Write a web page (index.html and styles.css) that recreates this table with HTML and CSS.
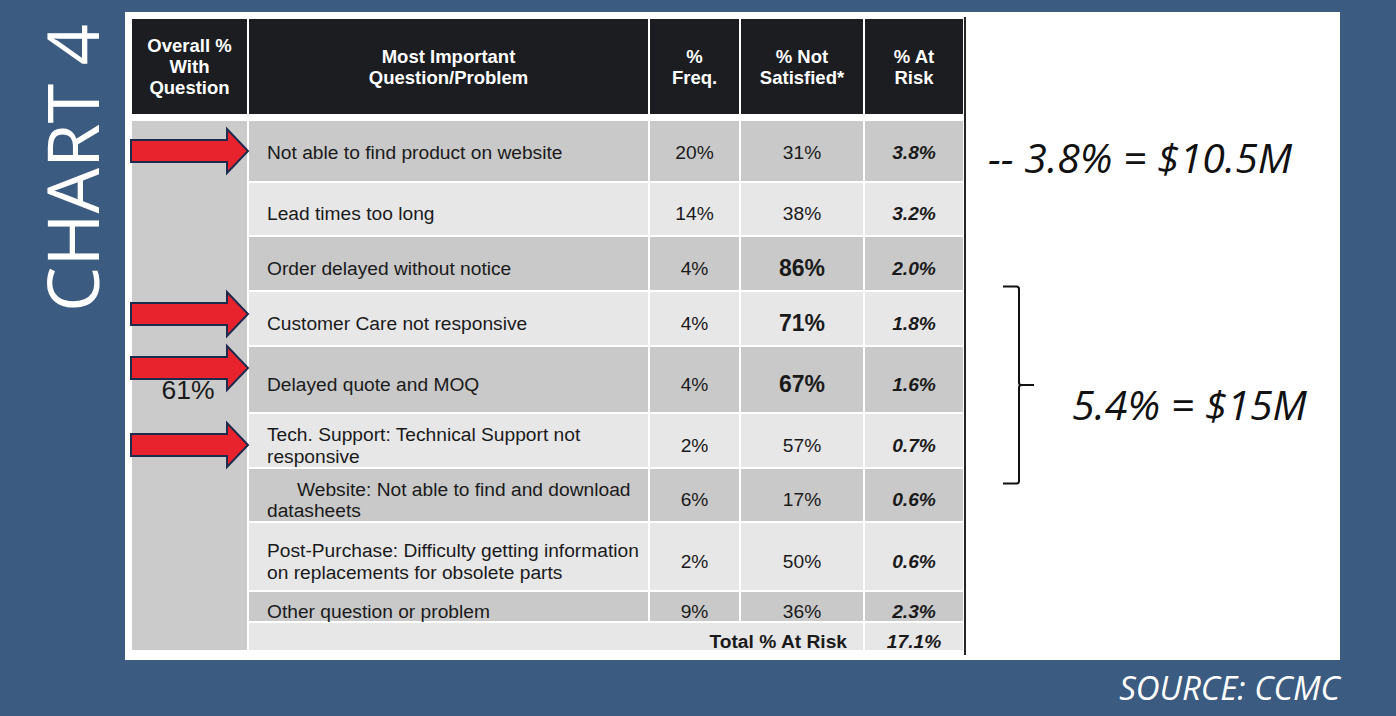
FILE: index.html
```html
<!DOCTYPE html>
<html lang="en">
<head>
<meta charset="utf-8">
<title>Chart 4</title>
<link rel="stylesheet" href="styles.css">
</head>
<body>
<div class="slide">
  <div class="side">
    <h1 class="chart-title">CHART 4</h1>
  </div>
  <div class="main">
    <div class="panel">
      <div class="table-wrap">
        <div class="thead">
          <div class="th">Overall %<br>With<br>Question</div>
          <div class="th">Most Important<br>Question/Problem</div>
          <div class="th">%<br>Freq.</div>
          <div class="th">% Not<br>Satisfied*</div>
          <div class="th">% At<br>Risk</div>
        </div>
        <div class="tbody">
          <div class="overall">61%</div>

          <div class="tr dark first">
            <div class="td q">Not able to find product on website</div>
            <div class="td n">20%</div>
            <div class="td n">31%</div>
            <div class="td r">3.8%</div>
          </div>
          <div class="tr light">
            <div class="td q">Lead times too long</div>
            <div class="td n">14%</div>
            <div class="td n">38%</div>
            <div class="td r">3.2%</div>
          </div>
          <div class="tr dark">
            <div class="td q">Order delayed without notice</div>
            <div class="td n">4%</div>
            <div class="td n big">86%</div>
            <div class="td r">2.0%</div>
          </div>
          <div class="tr light">
            <div class="td q">Customer Care not responsive</div>
            <div class="td n">4%</div>
            <div class="td n big">71%</div>
            <div class="td r">1.8%</div>
          </div>
          <div class="tr dark">
            <div class="td q">Delayed quote and MOQ</div>
            <div class="td n">4%</div>
            <div class="td n big">67%</div>
            <div class="td r">1.6%</div>
          </div>
          <div class="tr light">
            <div class="td q"><span>Tech. Support: Technical Support not<br>responsive</span></div>
            <div class="td n">2%</div>
            <div class="td n">57%</div>
            <div class="td r">0.7%</div>
          </div>
          <div class="tr dark">
            <div class="td q"><span class="indent">Website: Not able to find and download<br>datasheets</span></div>
            <div class="td n">6%</div>
            <div class="td n">17%</div>
            <div class="td r">0.6%</div>
          </div>
          <div class="tr light">
            <div class="td q"><span>Post-Purchase: Difficulty getting information<br>on replacements for obsolete parts</span></div>
            <div class="td n">2%</div>
            <div class="td n">50%</div>
            <div class="td r">0.6%</div>
          </div>
          <div class="tr dark">
            <div class="td q">Other question or problem</div>
            <div class="td n">9%</div>
            <div class="td n">36%</div>
            <div class="td r">2.3%</div>
          </div>
          <div class="tr light total">
            <div class="td total-label">Total % At Risk</div>
            <div class="td r">17.1%</div>
          </div>

          <svg class="arrow a1" viewBox="0 0 120 46" width="120" height="46"><polygon points="1,12 97,12 97,1 118,23 97,45 97,34 1,34"/></svg>
          <svg class="arrow a2" viewBox="0 0 120 46" width="120" height="46"><polygon points="1,12 97,12 97,1 118,23 97,45 97,34 1,34"/></svg>
          <svg class="arrow a3" viewBox="0 0 120 46" width="120" height="46"><polygon points="1,12 97,12 97,1 118,23 97,45 97,34 1,34"/></svg>
          <svg class="arrow a4" viewBox="0 0 120 46" width="120" height="46"><polygon points="1,12 97,12 97,1 118,23 97,45 97,34 1,34"/></svg>
        </div>
      </div>
      <div class="notes">
        <p class="note note-top">-- 3.8% = $10.5M</p>
        <div class="bracket-row">
          <svg class="bracket" viewBox="0 0 34 202" width="34" height="202"><path d="M1 1.5 H14.5 Q17 1.5 17 4 V97.5 Q17 100 19.5 100 H32 M19.5 100 Q17 100 17 102.5 V196 Q17 198.5 14.5 198.5 H1"/></svg>
          <p class="note note-mid">5.4% = $15M</p>
        </div>
      </div>
    </div>
    <div class="source">SOURCE: CCMC</div>
  </div>
</div>
</body>
</html>
```
FILE: styles.css
```css
* { box-sizing: border-box; }

html, body {
  margin: 0;
  padding: 0;
}

body {
  background: #3c5b81;
  font-family: "Liberation Sans", Arial, sans-serif;
  color: #1a1a1a;
}

.slide {
  width: 1396px;
  height: 716px;
  display: flex;
  overflow: hidden;
}

/* left vertical title */
.side {
  width: 125px;
  flex: none;
  padding-top: 24px;
}

.chart-title {
  margin: 0 0 0 35px;
  font-family: "Open Sans", sans-serif;
  font-weight: 400;
  font-size: 72px;
  line-height: 72px;
  color: #ffffff;
  writing-mode: vertical-rl;
  transform: rotate(180deg);
  white-space: nowrap;
}

.main {
  width: 1215px;
  flex: none;
  display: flex;
  flex-direction: column;
}

.panel {
  margin-top: 12px;
  height: 648px;
  background: #ffffff;
  display: flex;
  padding: 5px 0 0 7px;
}

/* table */
.table-wrap {
  flex: none;
  padding: 2px 1px 0 0;
  border-right: 2px solid #262626;
  height: 638px;
  display: flex;
  flex-direction: column;
  gap: 7px;
}

.thead {
  display: grid;
  grid-template-columns: 115px 399px 89px 122px 98px;
  column-gap: 2px;
  height: 95px;
}

.th {
  background: #1b1d21;
  color: #ffffff;
  font-weight: 700;
  font-size: 18.5px;
  line-height: 21px;
  text-align: center;
  display: flex;
  align-items: center;
  justify-content: center;
  padding-top: 0;
}

.tbody {
  position: relative;
  display: grid;
  grid-template-columns: 115px 399px 89px 122px 98px;
  grid-template-rows: 60px 52px 53px 53px 65px 53px 52px 67px 29px 27px;
  gap: 2px;
}

.overall {
  grid-column: 1;
  grid-row: 1 / span 10;
  background: #cbcbcb;
  display: flex;
  align-items: center;
  justify-content: center;
  font-size: 26.5px;
  padding: 9px 3px 0 0;
}

.tr { display: contents; }

.td {
  display: flex;
  align-items: center;
  justify-content: center;
  font-size: 19.2px;
  line-height: 21.5px;
  padding-top: 10px;
  white-space: nowrap;
}

.tr.first .td { padding-top: 3px; }

.tr.dark .td { background: #c9c9c9; }
.tr.light .td { background: #e7e7e8; }

.td.q {
  justify-content: flex-start;
  padding-left: 18px;
}

.indent {
  display: block;
  text-indent: 30px;
}

.td.big {
  font-size: 23px;
  font-weight: 700;
}

.td.r {
  font-weight: 700;
  font-style: italic;
}

.total-label {
  grid-column: 2 / span 3;
  justify-content: flex-end !important;
  padding-right: 16px;
  font-weight: 700;
}

/* arrows */
.arrow {
  position: absolute;
  left: -2px;
  overflow: visible;
}

.arrow polygon {
  fill: #e8232d;
  stroke: #1d2b4c;
  stroke-width: 2;
  stroke-linejoin: miter;
}

.a1 { top: 7px; }
.a2 { top: 170px; }
.a3 { top: 224px; }
.a4 { top: 301px; }

/* notes on the right */
.notes {
  flex: 1;
  display: flex;
  flex-direction: column;
  padding: 2px 0 0 22px;
}

.note {
  margin: 0;
  font-family: "Open Sans", sans-serif;
  font-style: italic;
  font-size: 41px;
  line-height: 48px;
  color: #111111;
  white-space: nowrap;
}

.note-top {
  margin-top: 114px;
}

.bracket-row {
  display: flex;
  align-items: flex-start;
  margin-top: 104px;
}

.bracket {
  margin-left: 14px;
  flex: none;
}

.bracket path {
  fill: none;
  stroke: #111111;
  stroke-width: 2;
}

.note-mid {
  margin-left: 36px;
  margin-top: 95px;
}

.source {
  margin-top: 8px;
  text-align: right;
  font-family: "Open Sans", sans-serif;
  font-style: italic;
  font-weight: 400;
  font-size: 33px;
  line-height: 40px;
  color: #ffffff;
  white-space: nowrap;
}
```
